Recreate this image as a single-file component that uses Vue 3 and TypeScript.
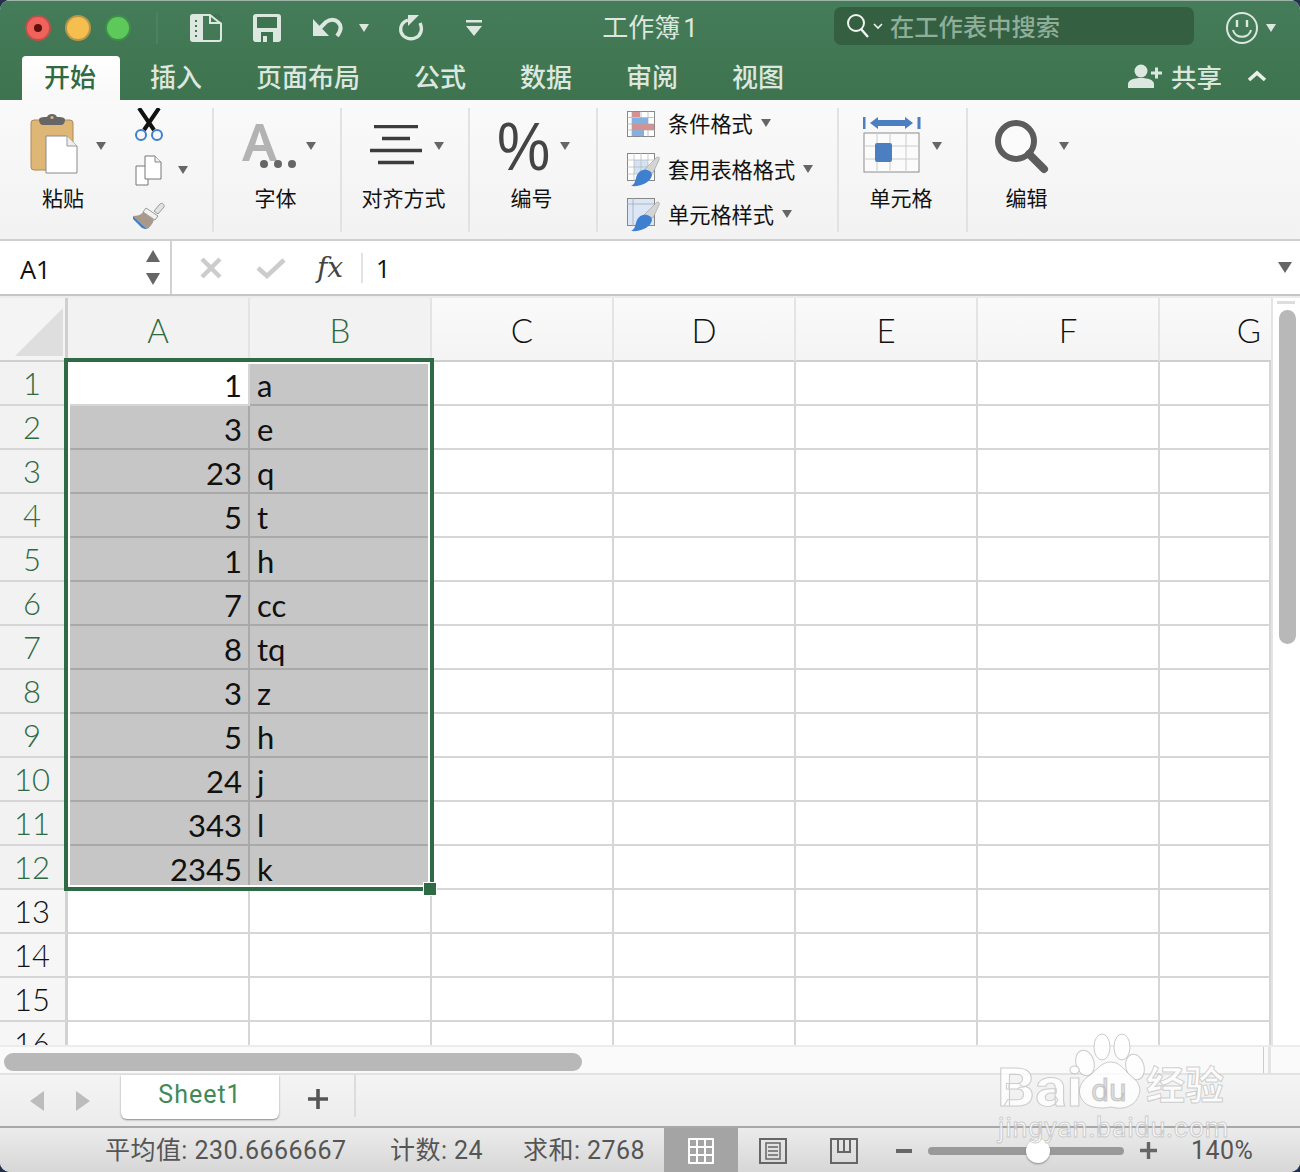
<script setup lang="ts">
const tabs = ['插入', '页面布局', '公式', '数据', '审阅', '视图']
const columns = ['A', 'B', 'C', 'D', 'E', 'F', 'G']

// selected data of columns A and B
const data: [string, string][] = [
  ['1', 'a'], ['3', 'e'], ['23', 'q'], ['5', 't'], ['1', 'h'], ['7', 'cc'],
  ['8', 'tq'], ['3', 'z'], ['5', 'h'], ['24', 'j'], ['343', 'l'], ['2345', 'k']
]
const rows = Array.from({ length: 16 }, (_, i) => i + 1)
const styleRows = [
  { label: '条件格式', icon: 'cond' },
  { label: '套用表格格式', icon: 'table' },
  { label: '单元格样式', icon: 'cell' }
]
</script>

<template>
  <div class="window">
    <header class="head">
      <div class="title-row">
        <span class="light red"><i></i></span>
        <span class="light yellow"></span>
        <span class="light green"></span>
        <span class="title-sep"></span>
        <svg class="q-file" width="32" height="28" viewBox="0 0 32 28">
          <rect x="1" y="1" width="30" height="26" rx="2" fill="none" stroke="#dce7df" stroke-width="2" />
          <path d="M1 3v22a2 2 0 0 0 2 2h8V1H3a2 2 0 0 0-2 2z" fill="#dce7df" />
          <path d="M11 0h2v28h-2z" fill="#dce7df" />
          <path d="M20 1v8h11" fill="none" stroke="#dce7df" stroke-width="2" />
          <path d="M20 0l12 9V2a2 2 0 0 0-2-2z" fill="#3f7450" />
          <path d="M20 1l10 8" stroke="#dce7df" stroke-width="2" />
          <path d="M6 6v2M6 11v2M6 16v2M6 21v2" stroke="#3f7450" stroke-width="2" />
        </svg>
        <svg class="q-save" width="28" height="28" viewBox="0 0 28 28">
          <path d="M3 0h22a3 3 0 0 1 3 3v22a3 3 0 0 1-3 3H3a3 3 0 0 1-3-3V3a3 3 0 0 1 3-3z" fill="#dce7df" />
          <rect x="4" y="3" width="20" height="11" fill="#3f7450" />
          <rect x="8" y="18" width="12" height="10" fill="#3f7450" />
          <rect x="10" y="22" width="4" height="6" fill="#dce7df" />
        </svg>
        <svg class="q-undo" width="30" height="21" viewBox="0 0 30 21">
          <path d="M0 2v17h16z" fill="#dce7df" />
          <path d="M7 11l6-6c4-3 9-3 12 0 4 4 3 9-1 14" fill="none" stroke="#dce7df" stroke-width="4" />
        </svg>
        <span class="caret light-caret q-caret"></span>
        <svg class="q-redo" width="26" height="27" viewBox="0 0 26 27">
          <path d="M9 6C3 8 1 13 2 18c2 6 9 8 14 6 6-2 8-9 5-15" fill="none" stroke="#dce7df" stroke-width="3.400" />
          <path d="M9 12V1l11 0z" fill="#dce7df" />
        </svg>
        <svg class="q-more" width="16" height="16" viewBox="0 0 16 16">
          <path d="M0 0h16v2.500H0zM0 6h16l-8 10z" fill="#dce7df" />
        </svg>
        <div class="doc-title">工作簿<span class="doc-num">1</span></div>
        <div class="search">
          <svg width="24" height="26" viewBox="0 0 24 26">
            <circle cx="10" cy="10" r="8" fill="none" stroke="#f0f5f1" stroke-width="2" />
            <path d="M15 16l7 8" stroke="#f0f5f1" stroke-width="2.400" />
          </svg>
          <svg class="search-chev" width="10" height="7" viewBox="0 0 10 7">
            <path d="M1 1l4 4 4-4" fill="none" stroke="#f0f5f1" stroke-width="1.600" />
          </svg>
          <span class="search-text">在工作表中搜索</span>
        </div>
        <svg class="smile" width="32" height="32" viewBox="0 0 32 32">
          <circle cx="16" cy="16" r="15" fill="none" stroke="#dce7df" stroke-width="2" />
          <path d="M11 8v7M21 8v7" stroke="#dce7df" stroke-width="2.400" />
          <path d="M7 18c2 9 16 9 18 0" fill="none" stroke="#dce7df" stroke-width="2" />
        </svg>
        <span class="caret light-caret smile-caret"></span>
      </div>
      <div class="tab-row">
        <div class="tab-active">开始</div>
        <div v-for="t in tabs" :key="t" class="tab">{{ t }}</div>
        <div class="share">
          <svg width="35" height="24" viewBox="0 0 35 24">
            <circle cx="13" cy="7" r="6.500" fill="#dce7df" />
            <path d="M0 24v-4c0-4 6-6 13-6s13 2 13 6v4z" fill="#dce7df" />
            <path d="M23 9h11M28.500 3.500v11" stroke="#dce7df" stroke-width="3" />
          </svg>
          <span>共享</span>
          <svg class="collapse" width="20" height="12" viewBox="0 0 20 12">
            <path d="M2 10l8-7 8 7" fill="none" stroke="#e8f0ea" stroke-width="3.600" />
          </svg>
        </div>
      </div>
    </header>

    <section class="ribbon">
      <div class="grp g1">
        <div class="paste">
          <div class="top">
            <svg class="i-paste" width="48" height="60" viewBox="0 0 48 60">
              <rect x="1" y="6" width="42" height="50" rx="3" fill="#deb676" stroke="#ae8a55" />
              <path d="M9 6c0-3 4-3 8-3 1-4 9-4 10 0 4 0 8 0 8 3 0 3-2 5-4 5H13c-2 0-4-2-4-5z" fill="#666" />
              <circle cx="22" cy="3.500" r="1.600" fill="#deb676" />
              <path d="M16 22h21l10 10v27H16z" fill="#fff" stroke="#8a8a8a" />
              <path d="M37 22v10h10" fill="#eee" stroke="#999" />
            </svg>
            <span class="caret c-paste"></span>
          </div>
          <div class="label paste-label">粘贴</div>
        </div>
        <div class="small-col">
          <svg class="i-cut" width="30" height="33" viewBox="0 0 30 33">
            <path d="M5 0l15 22M25 0L10 22" stroke="#111" stroke-width="4" />
            <circle cx="7" cy="27" r="5" fill="none" stroke="#3f7fd0" stroke-width="2" />
            <circle cx="23" cy="27" r="5" fill="none" stroke="#3f7fd0" stroke-width="2" />
          </svg>
          <div class="copy-row">
            <svg width="27" height="31" viewBox="0 0 27 31">
              <path d="M1 11h12v19H1z" fill="#fff" stroke="#777" />
              <path d="M10 1h10l6 6v17H10z" fill="#fff" stroke="#777" />
              <path d="M20 1v6h6" fill="#eee" stroke="#888" />
            </svg>
            <span class="caret c-copy"></span>
          </div>
          <svg class="i-brush" width="34" height="30" viewBox="0 0 34 30">
            <path d="M22 11l6-7c2-2 5 1 4 3l-6 7z" fill="#e2e2e2" stroke="#999" />
            <path d="M14 8l12 8-3 4-12-8z" fill="#f2f2f2" stroke="#999" />
            <path d="M11 12l11 8c-2 5-5 8-7 9L1 16c4 0 8-1 10-4z" fill="#a8998a" />
            <path d="M1 16l14 13c-1 0-3 0-5-1L1 19z" fill="#3f7fd0" />
          </svg>
        </div>
      </div>

      <div class="grp g2">
        <div class="top">
          <svg class="i-font" width="56" height="46" viewBox="0 0 56 46">
            <path d="M0 38L14 1h7l14 37h-7l-4-10H11L7 38zM13 22h9L17.500 8z" fill="#b3b3b3" />
            <circle cx="22" cy="41" r="4" fill="#666" /><circle cx="36" cy="41" r="4" fill="#666" /><circle cx="50" cy="41" r="4" fill="#666" />
          </svg>
          <span class="caret c-font"></span>
        </div>
        <div class="label">字体</div>
      </div>

      <div class="grp g3">
        <div class="top">
          <svg class="i-align" width="52" height="42" viewBox="0 0 52 42">
            <path d="M4 1.500h44M12 13.500h28M0 25.500h52M8 37.500h36" stroke="#3c3c3c" stroke-width="3.600" />
          </svg>
          <span class="caret c-align"></span>
        </div>
        <div class="label">对齐方式</div>
      </div>

      <div class="grp g4">
        <div class="top">
          <div class="percent">%</div>
          <span class="caret c-pct"></span>
        </div>
        <div class="label">编号</div>
      </div>

      <div class="grp g5">
        <div v-for="s in styleRows" :key="s.icon" class="style-row">
          <svg v-if="s.icon === 'cond'" width="28" height="26" viewBox="0 0 28 26">
            <rect x=".5" y=".5" width="27" height="25" fill="#fff" stroke="#888" />
            <path d="M5 1h8v5H5z" fill="#d98f8f" /><path d="M5 7h16v6H5z" fill="#7fb0e6" /><path d="M5 13h22v6H5z" fill="#d98f8f" /><path d="M5 19h12v6H5z" fill="#7fb0e6" />
            <path d="M5 0v26M14 0v26M21 0v26M0 6.500h28M0 13h28M0 19h28" stroke="#aaa" stroke-width=".7" />
          </svg>
          <svg v-else width="33" height="34" viewBox="0 0 33 34">
            <rect x=".5" y=".5" width="27" height="27" :fill="s.icon === 'cell' ? '#dbe7f6' : '#fff'" stroke="#888" />
            <path v-if="s.icon === 'table'" d="M7 7h14v14H7z" fill="#d3e3f6" />
            <path v-if="s.icon === 'table'" d="M7 0v28M14 0v28M21 0v28M0 7h28M0 14h28M0 21h28" stroke="#b5b5b5" stroke-width=".7" />
            <path v-else d="M0 6h28M6 0v28" stroke="#aaa" stroke-width=".8" />
            <path d="M17 17L29 5c2-2 4-1 3 2l-6 13z" fill="#d4d4d4" stroke="#999" stroke-width=".6" />
            <path d="M16 17c5-1 9 2 9 5-1 7-11 12-21 11 4-2 4-5 5-8 1-4 3-7 7-8z" fill="#3f7fd0" />
          </svg>
          <span class="style-label">{{ s.label }}</span>
          <span class="caret c-style"></span>
        </div>
      </div>

      <div class="grp g6">
        <div class="top">
          <svg class="i-cell" width="58" height="58" viewBox="0 0 58 58">
            <path d="M1 1v12M56 1v12" stroke="#4b7fc2" stroke-width="3" />
            <path d="M7 7l8-6v3h27v-3l8 6-8 6v-3H15v3z" fill="#4b7fc2" />
            <rect x="1" y="17" width="55" height="39" fill="#fbfbfb" stroke="#8c8c8c" stroke-width="1" />
            <path d="M14 17v39M27 17v39M43 17v39M1 30h55M1 43h55" stroke="#ccc" />
            <rect x="12" y="27" width="17" height="19" rx="2" fill="#4b7fc2" />
          </svg>
          <span class="caret c-cell"></span>
        </div>
        <div class="label">单元格</div>
      </div>

      <div class="grp g7">
        <div class="top">
          <svg class="i-find" width="54" height="54" viewBox="0 0 54 54">
            <circle cx="21" cy="21" r="18" fill="#fbfbfb" stroke="#5c5c5c" stroke-width="6" />
            <path d="M34 34l15 15" stroke="#5c5c5c" stroke-width="8" stroke-linecap="round" />
          </svg>
          <span class="caret c-find"></span>
        </div>
        <div class="label">编辑</div>
      </div>
    </section>

    <section class="formula">
      <div class="name-box">
        <span class="name-text">A1</span>
        <div class="spin"><i class="up"></i><i class="down"></i></div>
      </div>
      <svg class="f-x" width="24" height="24" viewBox="0 0 24 24">
        <path d="M3 3l18 18M21 3L3 21" stroke="#ccc" stroke-width="4.500" />
      </svg>
      <svg class="f-check" width="30" height="22" viewBox="0 0 30 22">
        <path d="M2 11l9 8L28 3" fill="none" stroke="#ccc" stroke-width="4.500" />
      </svg>
      <span class="fx">fx</span>
      <span class="f-sep"></span>
      <span class="f-value">1</span>
      <span class="caret c-formula"></span>
    </section>

    <section class="sheet">
      <div class="grid">
        <div class="corner">
          <svg width="48" height="48" viewBox="0 0 48 48"><path d="M48 0v48H0z" fill="#dedede" /></svg>
        </div>
        <div
          v-for="(c, i) in columns"
          :key="c"
          class="col-head"
          :class="{ on: i < 2, last: i === 6 }"
        >{{ c }}</div>
        <template v-for="r in rows" :key="r">
          <div class="row-head" :class="{ on: r <= 12 }">{{ r }}</div>
          <div
            class="cell num"
            :class="{ sel: r <= 12 && r > 1 }"
          >{{ data[r - 1]?.[0] }}</div>
          <div class="cell txt" :class="{ sel: r <= 12 }">{{ data[r - 1]?.[1] }}</div>
          <div v-for="c in 5" :key="c" class="cell"></div>
        </template>
        <div class="selection"><span class="handle"></span></div>
      </div>
      <div class="v-scroll">
        <span class="v-mark"></span>
        <span class="v-thumb"></span>
      </div>
    </section>

    <div class="h-scroll">
      <span class="h-thumb"></span>
      <span class="h-mark"></span>
    </div>

    <div class="sheet-bar">
      <span class="arrow left"></span>
      <span class="arrow right"></span>
      <div class="sheet-tab">Sheet1</div>
      <svg class="add" width="20" height="20" viewBox="0 0 20 20">
        <path d="M10 0v20M0 10h20" stroke="#555" stroke-width="3.600" />
      </svg>
      <span class="bar-sep"></span>
    </div>

    <footer class="status">
      <span class="st st1">平均值: 230.6666667</span>
      <span class="st st2">计数: 24</span>
      <span class="st st3">求和: 2768</span>
      <div class="view-on">
        <svg width="26" height="26" viewBox="0 0 26 26">
          <rect width="26" height="26" rx="1" fill="#fff" />
          <path d="M2 2h6v6H2zM10 2h6v6h-6zM18 2h6v6h-6zM2 10h6v6H2zM10 10h6v6h-6zM18 10h6v6h-6zM2 18h6v6H2zM10 18h6v6h-6zM18 18h6v6h-6z" fill="#a4a4a4" />
        </svg>
      </div>
      <svg class="v-page" width="28" height="26" viewBox="0 0 28 26">
        <rect x="1" y="1" width="26" height="24" fill="none" stroke="#666" stroke-width="2" />
        <rect x="7" y="5" width="14" height="16" fill="none" stroke="#666" stroke-width="1.500" />
        <path d="M9 9h10M9 13h10M9 17h10" stroke="#666" stroke-width="1.500" />
      </svg>
      <svg class="v-break" width="28" height="26" viewBox="0 0 28 26">
        <path d="M1 1h26v24H1zM8 1v13h12V1M14 1v13" fill="none" stroke="#666" stroke-width="2" />
      </svg>
      <span class="minus"></span>
      <div class="slider"><span class="knob"></span></div>
      <svg class="plus" width="17" height="17" viewBox="0 0 17 17">
        <path d="M8.500 0v17M0 8.500h17" stroke="#666" stroke-width="3.400" />
      </svg>
      <span class="st zoom">140%</span>
    </footer>

    <!-- watermark over the window -->
    <div class="mark">
      <svg class="paw" width="70" height="78" viewBox="0 0 70 78">
        <g fill="rgba(255,255,255,.8)" stroke="rgba(170,170,170,.6)">
          <ellipse cx="10" cy="30" rx="9" ry="13" transform="rotate(-15 10 30)" />
          <ellipse cx="27" cy="14" rx="8" ry="13" />
          <ellipse cx="47" cy="14" rx="8" ry="13" />
          <ellipse cx="60" cy="34" rx="9" ry="13" transform="rotate(-15 60 34)" />
          <path d="M36 29c9 0 13 8 19 13 9 7 13 14 7 24-4 7-13 10-20 9-3 0-4-1-6-1s-4 1-8 1c-9 0-18-2-22-10-4-9 0-17 9-23 7-5 11-13 21-13z" />
        </g>
      </svg>
      <span class="m-bai">Bai</span>
      <span class="m-du">du</span>
      <span class="m-cn">经验</span>
      <span class="m-url">jingyan.baidu.com</span>
    </div>
  </div>
</template>

<style scoped>
.window {
  position: relative;
  width: 1300px;
  height: 1172px;
  overflow: hidden;
  border-radius: 10px;
  background: #fff;
  display: flex;
  flex-direction: column;
  font-family: Roboto, "Noto Sans CJK SC", sans-serif;
}
.head {
  height: 100px;
  flex: none;
  box-sizing: border-box;
  border-top: 1px solid #9db5a6;
  background: linear-gradient(#457c59, #3e734f);
}
.title-row {
  height: 53px;
  display: flex;
  align-items: center;
  padding-left: 25px;
}
.light {
  width: 26px;
  height: 26px;
  box-sizing: border-box;
  border-radius: 50%;
  margin-right: 14px;
  display: flex;
  align-items: center;
  justify-content: center;
}
.red { background: #f0635a; border: 2px solid #b9524c; }
.red i { width: 8px; height: 8px; border-radius: 50%; background: #5e0f0b; }
.yellow { background: #f6bd4f; border: 2px solid #b79848; }
.green { background: #5dc95b; border: 2px solid #3f8f4c; }
.title-sep {
  width: 2px;
  height: 32px;
  background: #4f8062;
  margin-left: 11px;
}
.q-file { margin-left: 32px; }
.q-save { margin-left: 31px; }
.q-undo { margin-left: 32px; }
.q-caret { margin-left: 16px; }
.q-redo { margin-left: 30px; }
.q-more { margin-left: 41px; }
.caret {
  display: block;
  flex: none;
  width: 0;
  height: 0;
  border-left: 5px solid transparent;
  border-right: 5px solid transparent;
  border-top: 8px solid #666;
}
.light-caret { border-top-color: #dce7df; }
.doc-title {
  width: 100px;
  margin-left: 118px;
  margin-right: 134px;
  text-align: center;
  font-size: 26px;
  line-height: 34px;
  color: #dce7df;
  white-space: nowrap;
}
.doc-num { margin-left: 3px; }
.search {
  width: 360px;
  height: 38px;
  flex: none;
  margin-top: -3px;
  padding-left: 12px;
  box-sizing: border-box;
  border-radius: 7px;
  background: #355f41;
  display: flex;
  align-items: center;
  color: #8fae99;
  font-size: 24.300px;
  font-weight: 500;
}
.search-chev { margin: 0 7px 0 3px; }
.search-text { margin-top: -2px; }
.smile { margin-left: 32px; }
.smile-caret { margin-left: 8px; }
.tab-row {
  height: 46px;
  display: flex;
  align-items: flex-end;
  padding-left: 22px;
}
.tab-active {
  width: 98px;
  height: 44px;
  margin-right: 30px;
  border-radius: 4px 4px 0 0;
  background: linear-gradient(#fff, #f8f8f8);
  color: #2f6a42;
  text-align: center;
  font-size: 26px;
  font-weight: 500;
  line-height: 44px;
  text-indent: -2px;
}
.tab {
  margin-right: 54px;
  color: #dce7df;
  font-size: 26px;
  font-weight: 500;
  line-height: 43px;
}
.share {
  position: absolute;
  top: 54px;
  right: 33px;
  height: 44px;
  display: flex;
  align-items: center;
  color: #dce7df;
  font-size: 25.500px;
  font-weight: 500;
}
.share span { margin-left: 8px; margin-top: -2px; }
.collapse { margin-left: 25px; }
.ribbon {
  height: 141px;
  flex: none;
  box-sizing: border-box;
  padding-top: 8px;
  display: flex;
  align-items: flex-start;
  background: linear-gradient(#fafafa, #f2f2f2);
  border-bottom: 2px solid #cfcfcf;
}
.grp {
  height: 124px;
  flex: none;
  box-sizing: border-box;
  border-right: 2px solid #e2e2e2;
}
.g1 { width: 214px; padding-left: 30px; display: flex; }
.g2, .g3, .g4 { width: 128px; }
.g5 { width: 241px; padding: 1px 0 0 29px; }
.g6 { width: 129px; }
.g7 { width: 120px; border-right: 0; }
.top {
  height: 79px;
  display: flex;
  align-items: flex-start;
}
.label {
  font-size: 21px;
  line-height: 24px;
  color: #111;
  text-align: center;
  padding-right: 3px;
  white-space: nowrap;
}
.paste { width: 76px; flex: none; }
.paste-label { padding-right: 10px; }
.i-paste { margin-top: 6px; }
.c-paste { margin: 34px 0 0 18px; }
.small-col { margin-left: 28px; flex: none; }
.i-cut { display: block; margin-left: 0; }
.copy-row { display: flex; margin-top: 14px; margin-left: 1px; }
.c-copy { margin: 11px 0 0 16px; }
.i-brush { display: block; margin: 14px 0 0 -2px; }
.g2 .top { padding-left: 28px; }
.i-font { margin-top: 15px; }
.c-font { margin: 34px 0 0 8px; }
.g3 .top { padding-left: 28px; }
.i-align { margin-top: 17px; }
.c-align { margin: 34px 0 0 12px; }
.g4 .top { padding-left: 27px; }
.percent {
  width: 54px;
  height: 60px;
  margin-top: 8px;
  font-family: "Liberation Sans", sans-serif;
  font-size: 68px;
  line-height: 60px;
  color: #444;
  text-align: center;
  transform: scaleX(.88);
  transform-origin: left center;
}
.c-pct { margin: 34px 0 0 9px; }
.style-row {
  height: 30px;
  margin-bottom: 15px;
  display: flex;
  align-items: center;
}
.style-row:first-child { margin-bottom: 16px; }
.style-row:nth-child(2) { margin-bottom: 15px; }
.style-row svg { flex: none; width: 33px; }
.style-label {
  margin: -4px 0 0 8px;
  font-size: 21.200px;
  color: #111;
  white-space: nowrap;
}
.c-style { margin: -2px 0 0 8px; }
.style-row:first-child svg { width: 28px; margin-right: 5px; }
.g6 .top { padding-left: 24px; }
.i-cell { margin-top: 8px; }
.c-cell { margin: 34px 0 0 11px; }
.g7 .top { padding-left: 27px; }
.i-find { margin-top: 12px; }
.c-find { margin: 34px 0 0 10px; }
.formula {
  height: 55px;
  flex: none;
  box-sizing: border-box;
  display: flex;
  align-items: center;
  background: #fff;
  border-bottom: 2px solid #c6c6c6;
}
.name-box {
  width: 172px;
  height: 53px;
  flex: none;
  box-sizing: border-box;
  padding: 0 10px 0 20px;
  border-right: 2px solid #d2d2d2;
  display: flex;
  align-items: center;
  justify-content: space-between;
  font-family: "Open Sans", sans-serif;
  font-size: 25.500px;
  color: #111;
}
.name-text { margin-top: 3px; }
.spin i {
  display: block;
  width: 0;
  height: 0;
  border-left: 7px solid transparent;
  border-right: 7px solid transparent;
}
.spin .up { border-bottom: 12px solid #666; margin-bottom: 11px; }
.spin .down { border-top: 12px solid #666; }
.f-x { margin-left: 27px; }
.f-check { margin-left: 33px; }
.fx {
  margin-left: 31px;
  width: 32px;
  font-family: "DejaVu Serif", "Liberation Serif", serif;
  font-style: italic;
  font-size: 28px;
  color: #444;
}
.f-sep { width: 2px; height: 30px; margin-left: 12px; background: #e2e2e2; }
.f-value {
  margin-left: 13px;
  font-family: "Open Sans", sans-serif;
  font-size: 25px;
  color: #111;
}
.c-formula {
  margin-left: auto;
  margin-right: 8px;
  border-left-width: 7px;
  border-right-width: 7px;
  border-top-width: 11px;
}
.sheet {
  height: 749px;
  flex: none;
  display: flex;
  overflow: hidden;
  border-top: 2px solid #ececec;
  box-sizing: border-box;
}
.grid {
  position: relative;
  width: 1271px;
  flex: none;
  display: grid;
  grid-template-columns: 68px repeat(6, 182px) 111px;
  grid-auto-rows: 44px;
  grid-template-rows: 64px;
  font-family: Lato, sans-serif;
  font-size: 31px;
  color: #111;
}
.grid > div { box-sizing: border-box; }
.corner {
  background: #f4f4f4;
  border-right: 3px solid #cfcfcf;
  border-bottom: 2px solid #cfcfcf;
  padding: 10px 0 0 15px;
}
.corner svg { display: block; }
.col-head {
  display: flex;
  align-items: center;
  justify-content: center;
  background: linear-gradient(#fafafa, #f4f4f4);
  border-right: 2px solid #e4e4e4;
  border-bottom: 2px solid #cfcfcf;
  padding-top: 2px;
  font-weight: 300;
  font-size: 33px;
}
.col-head.on { color: #2f6a42; background: #f2f2f2; }
.col-head.last { justify-content: flex-end; padding-right: 10px; border-right: 0; }
.row-head {
  display: flex;
  align-items: center;
  justify-content: center;
  padding-right: 1px;
  background: #f6f6f6;
  border-right: 3px solid #d2d2d2;
  border-bottom: 2px solid #d6d6d6;
  font-weight: 300;
}
.row-head.on { color: #2f6a42; background: #f2f2f2; }
.cell {
  border-right: 2px solid #d6d6d6;
  border-bottom: 2px solid #d6d6d6;
  line-height: 46px;
  white-space: nowrap;
  overflow: hidden;
}
.num { text-align: right; padding-right: 6px; }
.txt { padding-left: 7px; }
.sel { background: #c6c6c6; border-color: #a9a9a9; }
.selection {
  position: absolute;
  left: 64px;
  top: 60px;
  width: 370px;
  height: 533px;
  border: 4px solid #2f6a47;
  box-shadow: inset 0 0 0 2px #fff;
}
.handle {
  position: absolute;
  right: -7px;
  bottom: -9px;
  width: 12px;
  height: 12px;
  background: #2f6a47;
  border: 1px solid #fff;
}
.v-scroll {
  flex: 1;
  background: #fff;
  border-left: 2px solid #e4e4e4;
  position: relative;
}
.v-mark {
  position: absolute;
  top: 3px;
  left: 4px;
  width: 18px;
  height: 3px;
  background: #ddd;
}
.v-thumb {
  position: absolute;
  top: 12px;
  left: 6px;
  width: 17px;
  height: 334px;
  border-radius: 9px;
  background: #b8b8b8;
}
.h-scroll {
  height: 30px;
  flex: none;
  box-sizing: border-box;
  position: relative;
  background: #fafafa;
  border-top: 2px solid #ececec;
  border-bottom: 2px solid #e2e2e2;
}
.h-thumb {
  position: absolute;
  left: 4px;
  top: 6px;
  width: 578px;
  height: 18px;
  border-radius: 9px;
  background: #b8b8b8;
}
.h-mark {
  position: absolute;
  left: 1263px;
  top: 0;
  bottom: 0;
  width: 8px;
  box-sizing: border-box;
  border-left: 1px solid #ccc;
  border-right: 3px solid #e4e4e4;
}
.sheet-bar {
  height: 51px;
  flex: none;
  position: relative;
  display: flex;
  align-items: flex-start;
  padding-left: 30px;
  background: linear-gradient(#f4f4f4, #ececec);
}
.arrow {
  width: 0;
  height: 0;
  margin-top: 16px;
  border-top: 10px solid transparent;
  border-bottom: 10px solid transparent;
}
.arrow.left { border-right: 14px solid #bcbcbc; }
.arrow.right { border-left: 14px solid #bcbcbc; margin-left: 32px; }
.sheet-tab {
  width: 158px;
  height: 44px;
  margin-left: 31px;
  background: #fff;
  border-radius: 0 0 6px 6px;
  box-shadow: 0 1px 2px #888;
  color: #3f8a58;
  text-align: center;
  font-size: 25px;
  letter-spacing: 1px;
  line-height: 40px;
}
.add { margin: 14px 0 0 29px; }
.bar-sep {
  width: 2px;
  height: 42px;
  margin-left: 26px;
  background: #dcdcdc;
}
.status {
  height: 47px;
  flex: none;
  box-sizing: border-box;
  position: relative;
  display: flex;
  align-items: center;
  padding-left: 105px;
  border-top: 2px solid #a8a8a8;
  background: linear-gradient(#ececec, #d6d6d6);
}
.st {
  color: #555;
  font-size: 25px;
  letter-spacing: .45px;
  line-height: 30px;
  white-space: nowrap;
}
.st1 { width: 285px; }
.st2 { width: 133px; }
.st3 { width: 141px; }
.view-on {
  width: 74px;
  height: 45px;
  flex: none;
  background: #a4a4a4;
  display: flex;
  align-items: center;
  justify-content: center;
}
.v-page { margin-left: 21px; }
.v-break { margin-left: 43px; }
.minus {
  width: 16px;
  height: 4px;
  margin-left: 38px;
  background: #666;
}
.slider {
  position: relative;
  width: 196px;
  height: 8px;
  margin-left: 16px;
  border-radius: 4px;
  background: #999;
}
.knob {
  position: absolute;
  left: 98px;
  top: -8px;
  width: 24px;
  height: 24px;
  border-radius: 50%;
  background: #fff;
  box-shadow: 0 1px 2px #888;
}
.plus { margin-left: 16px; }
.zoom { margin-left: 34px; }
.mark {
  position: absolute;
  left: 996px;
  top: 1032px;
  width: 240px;
  height: 112px;
  color: rgba(255, 255, 255, .8);
  font-family: Roboto, "Noto Sans CJK SC", sans-serif;
  pointer-events: none;
  -webkit-text-stroke: 1px rgba(170, 170, 170, .55);
}
.paw { position: absolute; left: 79px; top: 1px; }
.m-bai {
  position: absolute;
  left: 1px;
  top: 26px;
  font-size: 54px;
  line-height: 60px;
  font-weight: 700;
  transform: scaleX(1.1);
  transform-origin: left center;
}
.m-du {
  position: absolute;
  left: 95px;
  top: 41px;
  font-size: 32px;
  line-height: 34px;
  color: rgba(190, 190, 190, .5);
}
.m-cn {
  position: absolute;
  left: 150px;
  top: 31px;
  font-size: 39px;
  line-height: 46px;
  font-weight: 700;
}
.m-url {
  position: absolute;
  left: 2px;
  top: 80px;
  font-size: 27px;
  line-height: 32px;
  letter-spacing: .7px;
}
</style>

<style>
body { background: #24304c; }
</style>
